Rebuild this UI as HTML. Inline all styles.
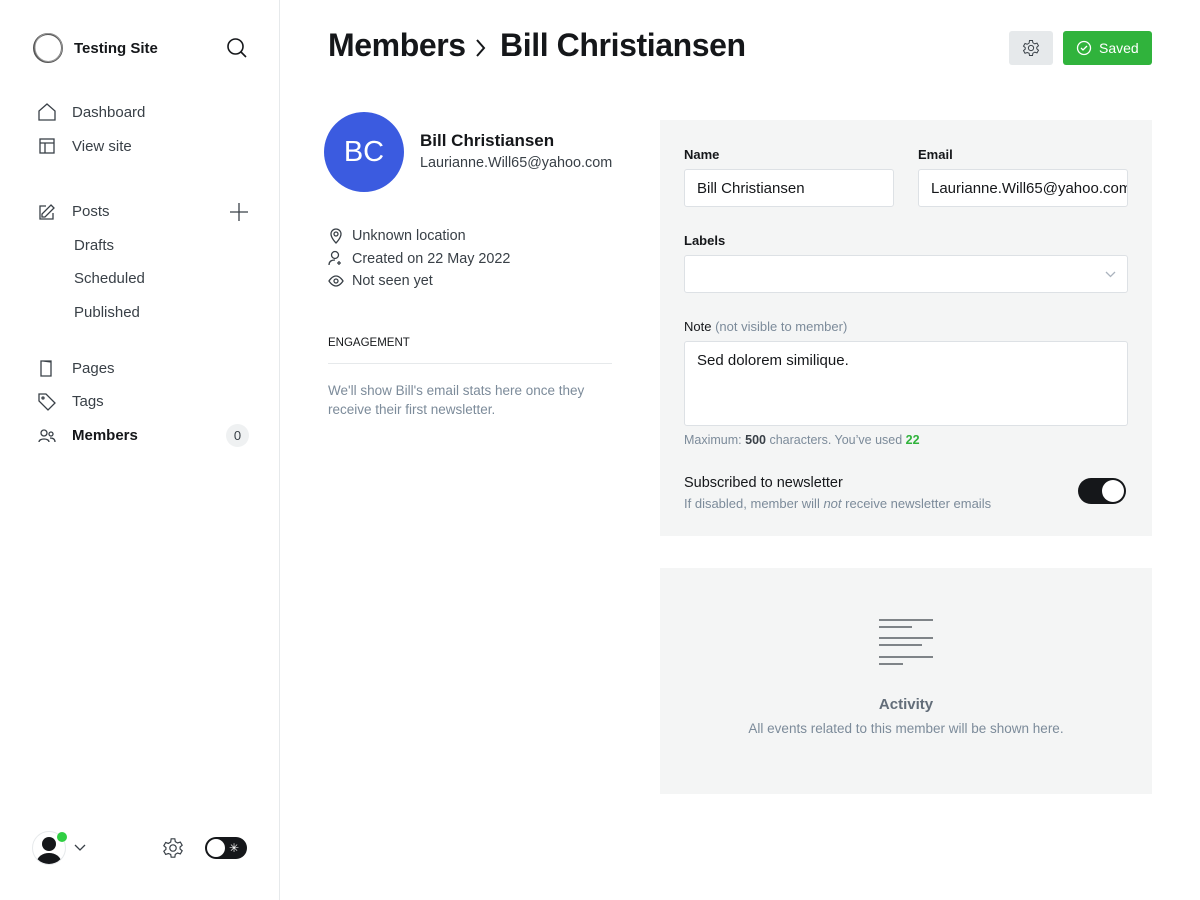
<!DOCTYPE html>
<html><head><style>
*{box-sizing:border-box;margin:0;padding:0}
body{width:1200px;height:900px;font-family:"Liberation Sans",sans-serif;background:#fff;color:#15171a;position:relative;overflow:hidden}
.side{position:absolute;left:0;top:0;width:280px;height:900px;border-right:1px solid #e6e9eb}
.abs{position:absolute}
.nav{position:absolute;left:72px;font-size:15px;color:#394047}
.ic{position:absolute;left:38px}
svg{fill:none;stroke:#394047;stroke-width:1.3}
.lbl{font-size:13px;color:#15171a;font-weight:bold;position:absolute}
.inp{position:absolute;border:1px solid #dde1e5;background:#fff;border-radius:3px;height:38px;font-size:15px;padding:10px 12px;color:#15171a;overflow:hidden;white-space:nowrap}
</style></head><body>
<div class="side">
<svg class="abs" style="left:32px;top:32px" width="32" height="32" viewBox="0 0 32 32"><ellipse cx="16" cy="16" rx="14" ry="14" stroke="#555" stroke-width="2"/><ellipse cx="16.5" cy="15.5" rx="13.5" ry="14" stroke="#999" stroke-width="1"/></svg>
<div class="abs" style="left:74px;top:40px;font-size:15px;font-weight:bold">Testing Site</div>
<svg class="abs" style="left:226px;top:37px" width="22" height="22" viewBox="0 0 22 22"><circle cx="9.5" cy="9.5" r="7.5" stroke="#15171a" stroke-width="1.6"/><path d="M15 15l5 5" stroke="#15171a" stroke-width="1.6"/></svg>
<svg class="ic" style="top:103px" width="18" height="18" viewBox="0 0 18 18"><path d="M1 8L9 1l8 7v9H1z"/></svg>
<div class="nav" style="top:104px">Dashboard</div>
<svg class="ic" style="top:137px" width="18" height="18" viewBox="0 0 18 18"><rect x="2" y="2" width="14" height="14"/><path d="M2 6h14M7 6v10"/></svg>
<div class="nav" style="top:138px">View site</div>
<svg class="ic" style="top:203px" width="18" height="18" viewBox="0 0 18 18"><path d="M13 2l3 3-9 9H4v-3zM8 3H2v13h13v-6"/></svg>
<div class="nav" style="top:203px">Posts</div>
<svg class="abs" style="left:229px;top:202px" width="20" height="20" viewBox="0 0 20 20"><path d="M10 1v18M1 10h18"/></svg>
<div class="nav" style="top:237px;left:74px">Drafts</div>
<div class="nav" style="top:270px;left:74px">Scheduled</div>
<div class="nav" style="top:304px;left:74px">Published</div>
<svg class="ic" style="top:359px" width="18" height="18" viewBox="0 0 18 18"><path d="M3 2h10v15H3zM5 2l8 1"/></svg>
<div class="nav" style="top:360px">Pages</div>
<svg class="ic" style="top:393px" width="18" height="18" viewBox="0 0 18 18"><path d="M1 1h7l9 9-7 7-9-9z"/><circle cx="5" cy="5" r="1"/></svg>
<div class="nav" style="top:393px">Tags</div>
<svg class="ic" style="top:427px" width="18" height="18" viewBox="0 0 18 18"><circle cx="6" cy="6" r="3"/><circle cx="13" cy="7" r="2"/><path d="M1 15c0-4 10-4 10 0M12 11c3 0 5 1 5 4"/></svg>
<div class="nav" style="top:427px;font-weight:bold;color:#15171a">Members</div>
<div class="abs" style="left:226px;top:424px;width:23px;height:23px;border-radius:12px;background:#eff1f2;font-size:13px;color:#394047;text-align:center;line-height:23px">0</div>
<div class="abs" style="left:32px;top:831px;width:34px;height:34px;border-radius:50%;border:1px solid #e6e9eb;overflow:hidden"><div class="abs" style="left:9px;top:5px;width:14px;height:14px;border-radius:50%;background:#15171a"></div><div class="abs" style="left:4px;top:21px;width:24px;height:18px;border-radius:50%;background:#15171a"></div></div>
<div class="abs" style="left:57px;top:832px;width:10px;height:10px;border-radius:50%;background:#30cf43"></div>
<svg class="abs" style="left:74px;top:844px" width="12" height="8" viewBox="0 0 12 8"><path d="M1 1l5 5 5-5"/></svg>
<svg class="abs" style="left:162px;top:837px" width="22" height="22" viewBox="0 0 24 24"><circle cx="12" cy="12" r="3.5"/><path d="M10 2h4l.5 3 2.5 1.5 3-1 2 3.5-2.3 2v2l2.3 2-2 3.5-3-1-2.5 1.5-.5 3h-4l-.5-3L7 18l-3 1-2-3.5 2.3-2v-2L2 9.5 4 6l3 1 2.5-1.5z"/></svg>
<div class="abs" style="left:205px;top:837px;width:42px;height:22px;border-radius:11px;background:#15171a"><div class="abs" style="left:2px;top:2px;width:18px;height:18px;border-radius:50%;background:#fff"></div><div class="abs" style="left:24px;top:4px;color:#fff;font-size:12px">✳</div></div>
</div>

<div class="abs" style="left:328px;top:27px;font-size:32px;font-weight:bold;letter-spacing:-0.4px">Members</div>
<svg class="abs" style="left:474px;top:38px" width="14" height="20" viewBox="0 0 14 20"><path d="M3 2l7 8-7 8" stroke="#15171a" stroke-width="2"/></svg>
<div class="abs" style="left:500px;top:27px;font-size:32px;font-weight:bold;letter-spacing:-0.4px">Bill Christiansen</div>
<div class="abs" style="left:1009px;top:31px;width:44px;height:34px;background:#e6e9eb;border-radius:3px"><svg class="abs" style="left:13px;top:8px" width="18" height="18" viewBox="0 0 24 24"><circle cx="12" cy="12" r="3.5"/><path d="M10 2h4l.5 3 2.5 1.5 3-1 2 3.5-2.3 2v2l2.3 2-2 3.5-3-1-2.5 1.5-.5 3h-4l-.5-3L7 18l-3 1-2-3.5 2.3-2v-2L2 9.5 4 6l3 1 2.5-1.5z"/></svg></div>
<div class="abs" style="left:1063px;top:31px;width:89px;height:34px;background:#30b33c;border-radius:3px;color:#fff;font-size:14px;padding:9px 0 0 36px">Saved<svg class="abs" style="left:13px;top:9px" width="16" height="16" viewBox="0 0 16 16"><circle cx="8" cy="8" r="6.5" stroke="#fff"/><path d="M5 8l2 2 4-4" stroke="#fff"/></svg></div>

<div class="abs" style="left:324px;top:112px;width:80px;height:80px;border-radius:50%;background:#3b5be0;color:#fff;font-size:29px;text-align:center;line-height:80px">BC</div>
<div class="abs" style="left:420px;top:131px;font-size:17px;font-weight:bold">Bill Christiansen</div>
<div class="abs" style="left:420px;top:155px;font-size:14.4px;color:#394047">Laurianne.Will65@yahoo.com</div>
<svg class="abs" style="left:329px;top:228px" width="14" height="16" viewBox="0 0 14 16"><path d="M7 15s5-5 5-9A5 5 0 002 6c0 4 5 9 5 9z"/><circle cx="7" cy="6" r="2"/></svg>
<div class="abs" style="left:352px;top:228px;font-size:14.4px;color:#394047">Unknown location</div>
<svg class="abs" style="left:328px;top:250px" width="16" height="16" viewBox="0 0 16 16"><circle cx="7" cy="5" r="3.5"/><path d="M1 15c0-4 3-5 6-5M11 11v4M9 13h4"/></svg>
<div class="abs" style="left:352px;top:251px;font-size:14.4px;color:#394047">Created on 22 May 2022</div>
<svg class="abs" style="left:328px;top:274px" width="16" height="14" viewBox="0 0 16 14"><path d="M1 7s3-5 7-5 7 5 7 5-3 5-7 5-7-5-7-5z"/><circle cx="8" cy="7" r="2"/></svg>
<div class="abs" style="left:352px;top:273px;font-size:14.4px;color:#394047">Not seen yet</div>
<div class="abs" style="left:328px;top:337px;font-size:11.5px;color:#15171a">ENGAGEMENT</div>
<div class="abs" style="left:328px;top:363px;width:284px;height:1px;background:#e6e9eb"></div>
<div class="abs" style="left:328px;top:381px;width:284px;font-size:13.5px;line-height:19px;color:#7c8b9a">We'll show Bill's email stats here once they receive their first newsletter.</div>

<div class="abs" style="left:660px;top:120px;width:492px;height:416px;background:#f4f5f5"></div>
<div class="lbl" style="left:684px;top:147px">Name</div>
<div class="lbl" style="left:918px;top:147px">Email</div>
<div class="inp" style="left:684px;top:169px;width:210px">Bill Christiansen</div>
<div class="inp" style="left:918px;top:169px;width:210px">Laurianne.Will65@yahoo.com</div>
<div class="lbl" style="left:684px;top:233px">Labels</div>
<div class="inp" style="left:684px;top:255px;width:444px"></div>
<svg class="abs" style="left:1105px;top:271px" width="11" height="7" viewBox="0 0 11 7"><path d="M1 1l4.5 4.5L10 1" stroke="#abb4be"/></svg>
<div class="lbl" style="left:684px;top:319px;font-weight:normal">Note <span style="color:#7c8b9a">(not visible to member)</span></div>
<div class="inp" style="left:684px;top:341px;width:444px;height:85px">Sed dolorem similique.</div>
<div class="abs" style="left:684px;top:433px;font-size:12.5px;color:#7c8b9a">Maximum: <b style="color:#394047">500</b> characters. You’ve used <b style="color:#30b33c">22</b></div>
<div class="abs" style="left:684px;top:475px;font-size:14.5px;color:#15171a">Subscribed to newsletter</div>
<div class="abs" style="left:684px;top:496px;font-size:13px;color:#7c8b9a">If disabled, member will <i>not</i> receive newsletter emails</div>
<div class="abs" style="left:1078px;top:478px;width:48px;height:26px;border-radius:13px;background:#15171a"><div class="abs" style="left:24px;top:2px;width:22px;height:22px;border-radius:50%;background:#fff"></div></div>

<div class="abs" style="left:660px;top:568px;width:492px;height:226px;background:#f4f5f5"></div>
<svg class="abs" style="left:878px;top:618px" width="56" height="50" viewBox="0 0 56 50" stroke="#c5cbd1" stroke-width="2"><path d="M1 2h54M1 9h33M1 20h54M1 27h43M1 39h54M1 46h24"/></svg>
<div class="abs" style="left:660px;top:696px;width:492px;text-align:center;font-size:15px;font-weight:bold;color:#626d79">Activity</div>
<div class="abs" style="left:660px;top:721px;width:492px;text-align:center;font-size:13.5px;color:#7c8b9a">All events related to this member will be shown here.</div>
</body></html>
